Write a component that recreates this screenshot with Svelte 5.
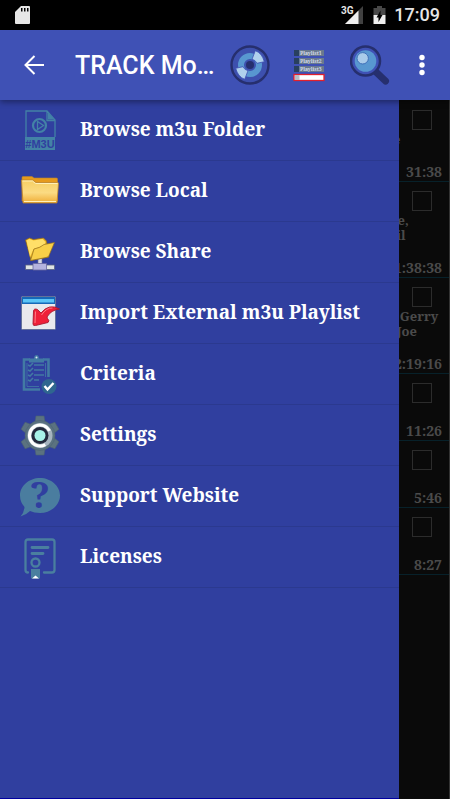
<script>
  const menu = [
    { icon: "m3u", label: "Browse m3u Folder" },
    { icon: "folder", label: "Browse Local" },
    { icon: "share", label: "Browse Share" },
    { icon: "import", label: "Import External m3u Playlist" },
    { icon: "criteria", label: "Criteria" },
    { icon: "settings", label: "Settings" },
    { icon: "support", label: "Support Website" },
    { icon: "licenses", label: "Licenses" },
  ];

  // only the tail of each line shows beside the open drawer
  const tracks = [
    { artists: "e", time: "31:38" },
    { artists: "le,\n il", time: "1:38:38" },
    { artists: "  Gerry\n Joe", time: "2:19:16" },
    { artists: "", time: "11:26" },
    { artists: "", time: "5:46" },
    { artists: "", time: "8:27" },
  ];

  const playlists = ["Playlist1", "Playlist2", "Playlist3"];
</script>

<div class="app">
  <div class="status">
    <svg class="sd" width="16" height="20" viewBox="0 0 16 20">
      <path d="M6 1h8q1 0 1 1v16q0 1-1 1H1q-1 0-1-1V7z" fill="#e6e6e6" />
      <path d="M6 3h1.500v3.500H6zM9 3h1.500v3.500H9zM12 3h1.500v3.500H12z" fill="#000" />
    </svg>
    <svg width="24" height="20" viewBox="0 0 24 20">
      <path d="M22 1v18H4z" fill="#404040" />
      <path d="M17.500 5.500V19H4z" fill="#eee" />
      <text class="net" x="0" y="9">3G</text>
    </svg>
    <svg width="13" height="20" viewBox="0 0 13 20">
      <path d="M4 1h5v2h3.500v7H.5V3H4z" fill="#484848" />
      <path d="M.5 10h12v9H.5z" fill="#eee" />
      <path d="M7.500 5.500V10H9.500L5.500 17v-4.500H3.500z" fill="#000" />
    </svg>
    <span class="clock">17:09</span>
  </div>

  <header>
    <button class="back" aria-label="Back">
      <svg width="24" height="24" viewBox="0 0 24 24" fill="none" stroke="#fff" stroke-width="2">
        <path d="M22 12H4M12.500 3L3.500 12l9 9" />
      </svg>
    </button>
    <h1>TRACK Mo…</h1>
    <button aria-label="Disc">
      <svg width="40" height="40" viewBox="0 0 40 40">
        <circle cx="20" cy="20" r="18.500" fill="#3d50ae" stroke="#262f6e" stroke-width="2.400" />
        <circle cx="20" cy="20" r="9" fill="none" stroke="#5897d0" stroke-width="6" />
        <path
          d="M25.300 5.700Q32 8 34.300 16.700L27 18.300Q25.500 15 22 14.300zM14.700 34.300Q8 32 5.700 23.300L13 21.700Q14.500 25 18 25.700z"
          fill="#b0d1ed"
          stroke="#3f51b5"
          stroke-width=".8"
        />
        <circle cx="20" cy="20" r="4" fill="#262f6e" />
      </svg>
    </button>
    <button aria-label="Playlists">
      <svg width="40" height="40" viewBox="0 0 40 40">
        {#each playlists as name, i}
          <rect x="4" y={5 + i * 8} width="30" height="6" fill="#68798f" />
          <rect x="4" y={5 + i * 8} width="5" height="6" fill="#29405f" />
          <text class="tiny" x="10" y={10 + i * 8}>{name}</text>
        {/each}
        <rect x="4" y="29.500" width="30" height="6" fill="#fff" stroke="#e3202c" stroke-width="1.300" />
        <rect x="5" y="30" width="4.500" height="5" fill="#b9bcc4" />
      </svg>
    </button>
    <button aria-label="Search">
      <svg width="40" height="40" viewBox="0 0 40 40">
        <path d="M26 27l9.500 9" stroke="#262f6e" stroke-width="7" stroke-linecap="round" />
        <circle cx="15.500" cy="16" r="14.500" fill="#3f51b5" stroke="#262f6e" stroke-width="2.500" />
        <circle cx="15.500" cy="16" r="10.800" fill="#5897d0" />
        <circle cx="12.700" cy="13.300" r="5.700" fill="#a9cbea" stroke="#3f6fb8" stroke-width="1" />
      </svg>
    </button>
    <button class="more" aria-label="More options">
      <svg width="8" height="24" viewBox="0 0 8 24" fill="#fff">
        <circle cx="4" cy="4.500" r="2.700" />
        <circle cx="4" cy="12" r="2.700" />
        <circle cx="4" cy="19.500" r="2.700" />
      </svg>
    </button>
  </header>

  <main>
    <ul class="tracks">
      {#each tracks as track, i}
        <li>
          <input type="checkbox" aria-label="Select track {i + 1}" />
          <p>{track.artists}</p>
          <time>{track.time}</time>
        </li>
      {/each}
    </ul>

    <nav>
      {#each menu as item}
        <a href="#{item.icon}">
          <svg width="40" height="40" viewBox="0 0 40 40">
            {#if item.icon === "m3u"}
              <g fill="none" stroke="#4382a6" stroke-width="1.300">
                <path d="M6 27V1h21l8 9v17M27 1v9.500h8" />
                <circle cx="19.500" cy="15.500" r="6.500" stroke-width="2.200" />
                <path d="M17.500 11.500v8l6-4z" />
              </g>
              <path d="M28 2v7.500h6z" fill="#4382a6" />
              <rect x="5" y="27" width="30" height="13" fill="#4382a6" />
              <text class="m3u" x="20" y="38">#M3U</text>
            {:else if item.icon === "folder"}
              <defs>
                <linearGradient id="front" x2="0" y2="1">
                  <stop offset="0" stop-color="#f6cf63" />
                  <stop offset=".55" stop-color="#fbdb83" />
                  <stop offset="1" stop-color="#efac35" />
                </linearGradient>
              </defs>
              <path d="M2 6.500q0-1 1-1h9l2 1.500h22.500q1 0 1 1V30H2z" fill="#e69a1c" stroke="#b98331" stroke-width=".6" />
              <path d="M1.500 9h11l3.500 2.500h21.500q1 0 1 1L37 32H3z" fill="url(#front)" stroke="#b98331" stroke-width=".8" />
              <path d="M2.500 10h10l3 2.500h22" fill="none" stroke="#fff0b9" />
              <path d="M4 30.500h32" stroke="#fff0b9" />
            {:else if item.icon === "share"}
              <path d="M18 26h4v8h-4z" fill="#d6d8e4" stroke="#70758f" stroke-width=".6" />
              <path d="M5.500 33h29v4.500h-29z" fill="#dfe4e4" stroke="#58617f" stroke-width=".8" />
              <path d="M13 31.500h13.500V38H13z" fill="#b4b4df" stroke="#67679f" stroke-width=".8" />
              <path d="M5.500 8l4-2 4 1.500 10-1.500 3 3L29 25l-18 3.500z" fill="#efb521" stroke="#8d6a20" stroke-width=".7" />
              <path d="M6.500 8.500l3-1.500 4 1.500 9-1.500 3 3-1 3-11 4-3.500 8z" fill="#ffdf68" />
              <path d="M10.500 28.500L14 17q6-1 10-4.500l10.500-2-5.500 13q-1 2-3 2z" fill="#f8cf48" stroke="#8d6a20" stroke-width=".7" />
            {:else if item.icon === "import"}
              <rect x="1.500" y="3.500" width="34" height="33" rx="1" fill="#e9e9ee" stroke="#63719a" />
              <path d="M2 4h33v7H2z" fill="#1769b8" />
              <path d="M3 6h31v3.500H3z" fill="#5bc4f6" />
              <path d="M3 12h31v23H3z" fill="#e9e9ed" />
              <path
                d="M39.500 16Q29 10 21 20l-3.500-3.500q-3.500-1.500-4 1.500L13 31q0 2 2.500 1.500L28 29.500q2-1.500-.5-4L27 24q4-7 12.500-8z"
                fill="#ef1f38"
                stroke="#a9182f"
                stroke-width=".9"
              />
              <path d="M15.500 18.500L15 30M21.500 22q5-7.500 11-7" fill="none" stroke="#ff7d86" />
            {:else if item.icon === "criteria"}
              <g fill="none" stroke="#427aa4" stroke-width="1.600">
                <path d="M20 35.500H4V5.500H10M23 5.500h5.500V23" stroke-width="2.600" />
                <path d="M25.500 9v14M7 9v23.500h12" stroke-width=".8" />
                <path d="M14 11h10M14 16h10M14 21h10M14 26h5" />
                <path d="M8 11l2 1 3-3M8 16l2 1 3-3M8 21l2 1 3-3M8 26l2 1 3-3" />
              </g>
              <path d="M9 8.500V4.500h5q0-3.500 2.500-3.500T19 4.500h5v4z" fill="#427aa4" />
              <circle cx="16.500" cy="3.500" r="1" fill="#d9e7ef" />
              <circle cx="29" cy="32.500" r="7.500" fill="#2f668f" />
              <path d="M24.500 32l3 3.500 6-6.500" fill="none" stroke="#fff" stroke-width="2.400" />
            {:else if item.icon === "settings"}
              <g fill="#5b7280" stroke="#4c6274" stroke-width=".6">
                {#each [0, 60, 120, 180, 240, 300] as turn}
                  <path d="M14.500 10L16 1h8l1.500 9z" transform="rotate({turn} 20 20.500)" />
                {/each}
                <circle cx="20" cy="20.500" r="15" />
              </g>
              <circle cx="20" cy="20.500" r="12.500" fill="#a6b4bf" />
              <circle
                cx="20"
                cy="20.500"
                r="10.500"
                fill="none"
                stroke="#fff"
                stroke-width="3"
                stroke-dasharray="50 16"
                transform="rotate(60 20 20.500)"
              />
              <circle cx="20" cy="20.500" r="8.500" fill="#242a3c" />
              <circle cx="20" cy="20.500" r="5.500" fill="#a8f3e8" />
            {:else if item.icon === "support"}
              <path d="M20 2c11 0 20 8 20 17.500S31 37 20 37q-6 0-10-2-4 4-9.500 5.500Q4 37 4.500 31 0 26 0 19.500C0 10 9 2 20 2z" fill="#4a7d9f" />
              <text class="ask" x="20" y="32">?</text>
            {:else}
              <g fill="none" stroke="#4a7f9f" stroke-width="2.300" stroke-linecap="round">
                <path d="M8 35.500q-2.500 0-2.500-2.500V5q0-2.500 2.500-2.500h24q2.500 0 2.500 2.500v28q0 2.500-2.500 2.500h-8" />
                <path d="M12 10.500h16M12 16.500h11" stroke-width="2.800" />
                <circle cx="15.500" cy="25.500" r="4" />
              </g>
              <path d="M11 32h9v9.500h-9z" fill="#4a7f9f" />
              <path d="M12 41.500l3.500-3 3.500 3z" fill="#fff" />
            {/if}
          </svg>
          <span>{item.label}</span>
        </a>
      {/each}
    </nav>
  </main>
</div>

<style>
  :global(body) {
    margin: 0;
    background: #fff;
  }
  .app {
    --serif: "Noto Serif", "Droid Serif", "DejaVu Serif", serif;
    display: flex;
    flex-direction: column;
    min-height: calc(100vh - 1px);
    font-family: Roboto, sans-serif;
  }
  .status {
    display: flex;
    align-items: center;
    gap: 8px;
    height: 30px;
    padding: 0 10px 0 15px;
    background: #000;
    color: #e6e6e6;
  }
  .sd {
    margin-right: auto;
  }
  .net {
    font-size: 10px;
    font-weight: 700;
    fill: #e6e6e6;
  }
  .clock {
    font-size: 18px;
    font-weight: 500;
    line-height: 30px;
  }
  header {
    z-index: 2;
    display: flex;
    align-items: center;
    height: 70px;
    padding-right: 6px;
    background: #3f51b5;
    box-shadow: 0 2px 6px rgba(0, 0, 0, 0.4);
  }
  button {
    display: flex;
    align-items: center;
    justify-content: center;
    flex: none;
    width: 60px;
    height: 60px;
    padding: 0;
    border: 0;
    background: none;
  }
  .back {
    width: 68px;
  }
  .more {
    width: 44px;
  }
  h1 {
    flex: 1;
    min-width: 0;
    margin: 0;
    padding: 2px 0 0 7px;
    overflow: hidden;
    color: #fff;
    font-size: 25px;
    font-weight: 500;
    line-height: 34px;
    white-space: nowrap;
  }
  .tiny {
    font: 700 5px "Noto Serif", serif;
    fill: #d5dce8;
  }
  main {
    position: relative;
    display: flex;
    flex: 1;
    background: #0a0a0a;
  }
  .tracks {
    flex: 1;
    margin: 0;
    padding: 1px 0 0;
    border-right: 1px solid #333;
    list-style: none;
    color: #4b4b4b;
    font-family: var(--serif);
    font-weight: 700;
  }
  li {
    display: flex;
    flex-direction: column;
    align-items: flex-end;
    box-sizing: border-box;
    min-height: 67px;
    padding: 9px 7px 0 0;
    border-bottom: 1px solid #07212a;
  }
  input {
    appearance: none;
    width: 20px;
    height: 20px;
    margin: 0 10px 2px 0;
    border: 1px solid #2c2c2c;
  }
  li p {
    width: 49px;
    margin: 0 0 16px;
    font-size: 13px;
    line-height: 15px;
    white-space: pre;
  }
  time {
    margin-top: auto;
    font-size: 14px;
    line-height: 18px;
  }
  nav {
    position: absolute;
    inset: 0 51px 0 0;
    box-sizing: border-box;
    border-bottom: 1px solid #0000a0;
    background: #303f9f;
  }
  nav a {
    display: flex;
    align-items: center;
    gap: 20px;
    box-sizing: border-box;
    height: 61px;
    padding-left: 20px;
    border-bottom: 1px solid #2b398f;
    color: #fff;
    font-family: var(--serif);
    font-size: 19px;
    font-weight: 700;
    line-height: 24px;
    text-decoration: none;
  }
  nav svg {
    overflow: visible;
  }
  nav span {
    padding-bottom: 2px;
  }
  .m3u {
    font: 700 11px "Liberation Sans", sans-serif;
    fill: #303f9f;
    text-anchor: middle;
  }
  .ask {
    font: 700 36px "Noto Serif", serif;
    fill: #303f9f;
    text-anchor: middle;
  }
</style>
